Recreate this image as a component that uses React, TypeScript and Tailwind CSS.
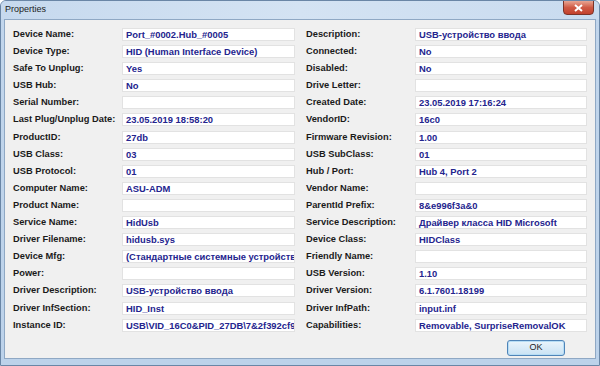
const rows: [string, string, string, string][] = [
  ['Device Name:', 'Port_#0002.Hub_#0005', 'Description:', 'USB-устройство ввода'],
  ['Device Type:', 'HID (Human Interface Device)', 'Connected:', 'No'],
  ['Safe To Unplug:', 'Yes', 'Disabled:', 'No'],
  ['USB Hub:', 'No', 'Drive Letter:', ''],
  ['Serial Number:', '', 'Created Date:', '23.05.2019 17:16:24'],
  ['Last Plug/Unplug Date:', '23.05.2019 18:58:20', 'VendorID:', '16c0'],
  ['ProductID:', '27db', 'Firmware Revision:', '1.00'],
  ['USB Class:', '03', 'USB SubClass:', '01'],
  ['USB Protocol:', '01', 'Hub / Port:', 'Hub 4, Port 2'],
  ['Computer Name:', 'ASU-ADM', 'Vendor Name:', ''],
  ['Product Name:', '', 'ParentId Prefix:', '8&e996f3a&0'],
  ['Service Name:', 'HidUsb', 'Service Description:', 'Драйвер класса HID Microsoft'],
  ['Driver Filename:', 'hidusb.sys', 'Device Class:', 'HIDClass'],
  ['Device Mfg:', '(Стандартные системные устройства)', 'Friendly Name:', ''],
  ['Power:', '', 'USB Version:', '1.10'],
  ['Driver Description:', 'USB-устройство ввода', 'Driver Version:', '6.1.7601.18199'],
  ['Driver InfSection:', 'HID_Inst', 'Driver InfPath:', 'input.inf'],
  ['Instance ID:', 'USB\\VID_16C0&PID_27DB\\7&2f392cf9&0&2', 'Capabilities:', 'Removable, SurpriseRemovalOK'],
]

function Field({ value, width }: { value: string; width: string }) {
  return (
    <div
      className={`${width} h-[13px] bg-white border border-[#e2e2e2] pl-[3px] overflow-hidden whitespace-nowrap leading-[11px] text-[9.4px] font-bold text-[#24248e]`}
    >
      {value}
    </div>
  )
}

export default function App() {
  return (
    <div
      className="w-[600px] h-[366px] relative overflow-hidden flex flex-col bg-gradient-to-b from-[#c2d6ec] to-[#bcd2ea] border border-[#6a86a6] rounded-t-[6px]"
      style={{ fontFamily: '"Liberation Sans", Arial, sans-serif' }}
    >
      {/* title bar */}
      <div className="h-[18px] shrink-0 flex items-center pl-[4px] text-[9px] text-[#1c1c1c] bg-gradient-to-r from-[#c6d9ee] via-[#d4e3f3] to-[#c9dbef]">
        Properties
      </div>
      <div className="absolute top-[-1px] right-[5px] w-[31px] h-[15px] rounded-b-[4px] border border-[#7b3328] bg-gradient-to-b from-[#e7a593] via-[#cf5a45] to-[#c2402c] flex items-center justify-center">
        <svg width="9" height="8" viewBox="0 0 9 8">
          <path d="M1 1 L8 7 M8 1 L1 7" stroke="#ffffff" strokeWidth="2" />
        </svg>
      </div>

      {/* content */}
      <div className="flex-1 mx-[3px] mb-[6px] border border-[#8fa8c4] bg-[#f0f0f0] pt-[8px] pl-[8px] flex flex-col">
        <div className="flex flex-col gap-y-[4.1px]">
          {rows.map(([l1, v1, l2, v2]) => (
            <div key={l1} className="flex items-center h-[13px]">
              <div className="w-[109px] leading-[13px] text-[9.3px] font-bold text-[#1a1a1a] whitespace-nowrap">{l1}</div>
              <Field value={v1} width="w-[173px]" />
              <div className="w-[11px]" />
              <div className="w-[109px] leading-[13px] text-[9.3px] font-bold text-[#1a1a1a] whitespace-nowrap">{l2}</div>
              <Field value={v2} width="w-[172px]" />
            </div>
          ))}
        </div>
        <div className="flex justify-end pr-[30px] mt-[8px]">
          <button className="w-[58px] h-[16px] rounded-[3px] border border-[#4f84b8] bg-gradient-to-b from-[#eaf4fb] to-[#c9e2f4] text-[9px] text-[#222] leading-none shadow-[inset_0_0_0_1px_#b7ddf5]">
            OK
          </button>
        </div>
      </div>
    </div>
  )
}
